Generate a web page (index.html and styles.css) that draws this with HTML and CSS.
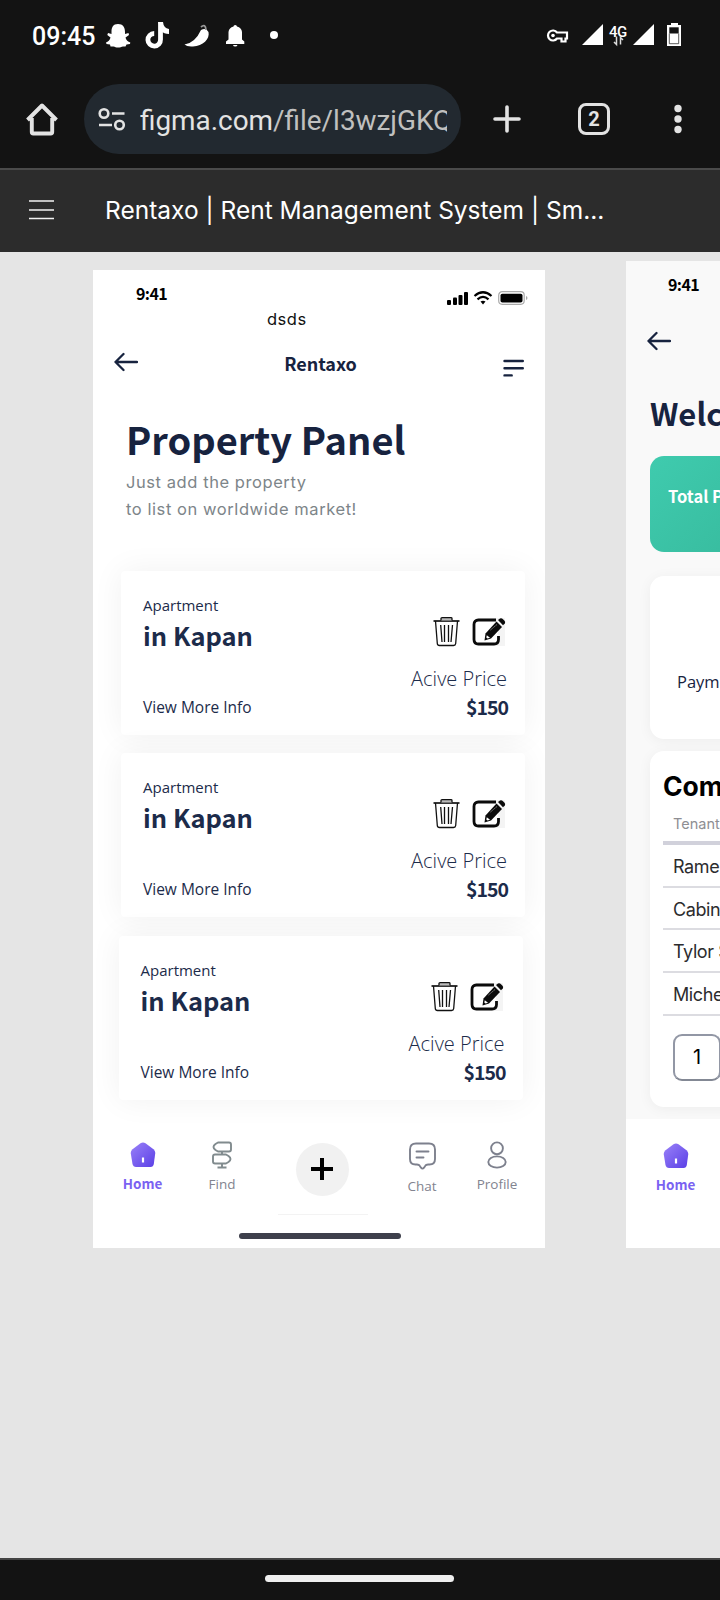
FILE: index.html
```
<!DOCTYPE html>
<html lang="en">
<head>
<meta charset="utf-8">
<title>Rentaxo</title>
<link rel="stylesheet" href="styles.css">
</head>
<body>
<svg class="defs" aria-hidden="true">
  <defs>
    <linearGradient id="violet" x1="0" y1="0" x2="1" y2="1"><stop offset="0" stop-color="#9a82f8"/><stop offset="1" stop-color="#5a3fe6"/></linearGradient>
    <symbol id="arrow" viewBox="0 0 24 20"><path d="M23 10H1.500M9.500 2L1.500 10L9.500 18" fill="none" stroke="#17233f" stroke-width="2.300" stroke-linecap="round" stroke-linejoin="round"/></symbol>
    <symbol id="home" viewBox="0 0 26 26"><path d="M10.500 1.300Q13 -.3 15.500 1.300L23.500 7.300Q25.500 9 25.200 11.500L23.800 22Q23.300 25 20.500 25H6Q3.200 25 2.500 22L.8 11.500Q.5 9 2.500 7.300Z" fill="url(#violet)"/><path d="M13 15.500V20.500" stroke="#fff" stroke-width="2.200"/></symbol>
    <symbol id="trash" viewBox="0 0 27 30"><g fill="none" stroke="#111" stroke-width="1.300" stroke-linejoin="round"><path d="M2.500 4L4.300 26.500Q4.500 28.500 6.500 28.500H20.500Q22.500 28.500 22.700 26.500L24.500 4M7.700 8L9 25M11.500 8V25M15.500 8V25M19.500 8L18 25"/><path d="M.5 4H26.500" stroke-width="1.700"/><path d="M8 3.500V1.500Q8 .7 9 .7H18Q19 .7 19 1.500V3.500" fill="#bbb"/></g></symbol>
    <symbol id="edit" viewBox="0 0 34 30"><path d="M5 1H33V29H5Z" fill="#f4f4f4"/><path d="M24 3H6.500Q2 3 2 7.500V22.500Q2 27 6.500 27H22Q26.500 27 26.500 22.500V19" fill="#fff" stroke="#0b0b0b" stroke-width="2.800"/><path d="M24.500 4.500L30 10L19 21.500L12.500 23.500L13.500 16.500Z" fill="#0b0b0b"/><path d="M26 3L28 1.500Q29.500.8 31 2.200L32.500 3.700Q33.700 5 32.800 6.500L31 8.300Z" fill="#0b0b0b"/><path d="M14.800 18.300L18 20.800L15.500 21.500L14.300 20.500Z" fill="#fff"/><path d="M18.500 13L25 7.500" stroke="#999" stroke-width="1" stroke-dasharray="1.500 1"/></symbol>
  </defs>
</svg>

<header class="status">
  <span class="clock">09:45</span>
  <svg class="notifs" viewBox="0 0 180 30" width="180" height="30" fill="#fff">
    <path d="M14 2C9 2 7.500 5.500 7.500 10V12L4 11L3.300 13L6.500 15.500C6 18 4 20 2 20.500L2.500 22L6 22.500L6.500 24.500H9.500C11 25 12 25.500 14 25.500S17.500 25 19 24.500H21.500L22.500 22.500L26 22L26.300 20.500C24 20 22 18 21.500 15.500L25 13L24.500 11L21 12V10C21 5.500 19 2 14 2Z"/>
    <path d="M56.500 0V17.500A6.300 6.300 0 1 1 50.200 11.500" fill="none" stroke="#fff" stroke-width="4.800"/><path d="M54.100 0H59Q59.500 6 65 7V12Q60 12 57 9Z"/>
    <path d="M97 8Q102 5 104.500 10C106 17 99 24 89 24.500Q83 25 80.500 22.500Q91 21 97 8Z"/><path d="M97 5Q101.500 1 102 8" fill="none" stroke="#999" stroke-width="1.800"/>
    <path d="M122 22V19.500L124.500 17.500V10Q125 5.500 129.500 4.500Q129.500 3 131.200 3T133 4.500Q137.500 5.500 138 10V17.500L140.300 19.500V22ZM129 23H133.500Q133 24.500 131.200 24.500T129 23Z"/>
    <circle cx="170" cy="13" r="4"/>
  </svg>
  <svg class="signals" viewBox="0 0 140 30" width="140" height="30" fill="#fff">
    <path d="M12 10.500A5 5 0 1 0 12 16.500H16.500V19.500H20.500V16.500H22V10.500Z" fill="none" stroke="#fff" stroke-width="2.200"/><circle cx="8" cy="13.500" r="1.800"/>
    <path d="M37 23L58 2V23ZM88 23L109 2V23Z"/>
    <text x="64" y="14.500" class="net">4G</text>
    <path d="M71.500 14.500V22.500L69 20M75.500 22.500V15.500L78 18" fill="none" stroke="#ddd" stroke-width="1.500"/>
    <path d="M126 1H133V3H136V24H122V3H126Z"/><path d="M124.300 5.300H133.700V11.500H124.300Z" fill="#131313"/><path d="M124.300 11.500V21.700H133.700V11.500" fill="none" stroke="#333" stroke-width=".8"/>
  </svg>
</header>

<div class="toolbar">
  <svg class="t-home" viewBox="0 0 32 34" width="32" height="34" fill="none" stroke="#e3e3e3" stroke-width="3.900" stroke-linejoin="round"><path d="M1.500 18L16 3.500L30.500 18M5.800 16V30Q5.800 31.500 7.300 31.500H24.700Q26.200 31.500 26.200 30V16"/></svg>
  <div class="url">
    <svg viewBox="0 0 28 24" width="28" height="24" fill="none" stroke="#e3e3e3" stroke-width="2.600"><circle cx="6" cy="6.500" r="4.300"/><path d="M14 6.500H26.500M1 18H14"/><circle cx="21.500" cy="18" r="4.300"/></svg>
    <span class="addr">figma.com<span class="path">/file/l3wzjGKQ</span></span>
  </div>
  <svg class="t-plus" viewBox="0 0 28 28" width="28" height="28" stroke="#e3e3e3" stroke-width="3.600" stroke-linecap="round"><path d="M14 2V26M2 14H26"/></svg>
  <div class="tabs">2</div>
  <svg class="t-more" viewBox="0 0 8 30" width="8" height="30" fill="#e3e3e3"><circle cx="4" cy="4.500" r="3.700"/><circle cx="4" cy="15" r="3.700"/><circle cx="4" cy="25.500" r="3.700"/></svg>
</div>

<div class="filebar">
  <svg viewBox="0 0 25 20" width="25" height="20" stroke="#f2f2f2" stroke-width="1.600"><path d="M0 1H25M0 10H25M0 18.500H25"/></svg>
  <span class="filename">Rentaxo | Rent Management System | Sm...</span>
</div>

<main class="canvas">
  <section class="frame one">
    <div class="phone-status">
      <span class="time">9:41</span>
      <svg viewBox="0 0 82 16" width="82" height="16"><g fill="#000"><rect x="0" y="10" width="4" height="5" rx="1"/><rect x="6" y="7.500" width="4" height="7.500" rx="1"/><rect x="11.500" y="5" width="4" height="10" rx="1"/><rect x="17" y="2" width="4" height="13" rx="1"/></g><path d="M27.500 6Q36 -1.500 44.500 6M30.500 9.300Q36 4.500 41.500 9.300" fill="none" stroke="#000" stroke-width="2.200"/><path d="M33.500 11.500Q36 10 38.500 11.500L36 14.500Z"/><rect x="51.700" y="1.700" width="25.500" height="12.600" rx="3.500" fill="none" stroke="#aaa" stroke-width="1.200"/><rect x="53.500" y="3.700" width="22" height="8.800" rx="1.800"/><path d="M79 6V10Q80.500 9.500 80.500 8T79 6Z" fill="#aaa"/></svg>
    </div>
    <div class="dsds">dsds</div>
    <div class="head">
      <svg class="back" width="24" height="20"><use href="#arrow"/></svg>
      <span class="brand">Rentaxo</span>
      <svg class="menu" viewBox="0 0 22 20" width="22" height="20" stroke="#17233f" stroke-width="2.400" stroke-linecap="round"><path d="M1.500 3H19.800M1.500 10.200H19.800M1.500 17.400H8.700"/></svg>
    </div>
    <h1>Property Panel</h1>
    <p class="lead">Just add the property<br>to list on worldwide market!</p>
    <div class="cards">
      <article class="card">
        <div class="info"><span class="kind">Apartment</span><span class="place">in Kapan</span><span class="more">View More Info</span></div>
        <div class="side"><div class="acts"><svg width="27" height="30"><use href="#trash"/></svg><svg width="34" height="30"><use href="#edit"/></svg></div><span class="label">Acive Price</span><span class="price">$150</span></div>
      </article>
      <article class="card">
        <div class="info"><span class="kind">Apartment</span><span class="place">in Kapan</span><span class="more">View More Info</span></div>
        <div class="side"><div class="acts"><svg width="27" height="30"><use href="#trash"/></svg><svg width="34" height="30"><use href="#edit"/></svg></div><span class="label">Acive Price</span><span class="price">$150</span></div>
      </article>
      <article class="card last">
        <div class="info"><span class="kind">Apartment</span><span class="place">in Kapan</span><span class="more">View More Info</span></div>
        <div class="side"><div class="acts"><svg width="27" height="30"><use href="#trash"/></svg><svg width="34" height="30"><use href="#edit"/></svg></div><span class="label">Acive Price</span><span class="price">$150</span></div>
      </article>
    </div>
    <nav class="nav">
      <a class="item on"><svg width="26" height="26"><use href="#home"/></svg><span>Home</span></a>
      <a class="item find"><svg viewBox="0 0 20 28" width="20" height="28" fill="none" stroke="#818b8e" stroke-width="1.900" stroke-linejoin="round"><path d="M6 1.500H17Q19 1.500 19 3.500V8.500Q19 10.500 17 10.500H6L3.500 9Q-.5 6 3.500 3ZM14 13.500H3Q1 13.500 1 15.500V20.500Q1 22.500 3 22.500H14L16.500 21Q20.500 18 16.500 15ZM10 10.500V13.500M10 22.500V26.500M5.500 26.500H14.500"/></svg><span>Find</span></a>
      <a class="item add"><span class="plus"><svg viewBox="0 0 24 24" width="24" height="24" stroke="#000" stroke-width="4"><path d="M12 1V23M1 12H23"/></svg></span></a>
      <a class="item chat"><svg viewBox="0 0 27 28" width="27" height="28" fill="none" stroke="#7d808d" stroke-width="1.900" stroke-linecap="round" stroke-linejoin="round"><path d="M7 1.500H20Q26 1.500 26 7.500V17Q26 22.500 20.500 22.500H19Q17 22.500 16.500 23.500L15 25.700Q13.500 27.500 12 25.700L10.500 23.500Q10 22.500 8 22.500H6.500Q1 22.500 1 17V7.500Q1 1.500 7 1.500ZM7.500 9.500H19.500M7.500 15.500H14.500"/></svg><span>Chat</span></a>
      <a class="item prof"><svg viewBox="0 0 20 28" width="20" height="28" fill="none" stroke="#7d808d" stroke-width="1.900"><circle cx="10" cy="7.300" r="5.900"/><ellipse cx="10" cy="21" rx="8.700" ry="5.600"/></svg><span>Profile</span></a>
    </nav>
    <div class="hair"></div>
    <div class="grip"></div>
  </section>

  <section class="frame two">
    <span class="time">9:41</span>
    <svg class="back" width="24" height="20"><use href="#arrow"/></svg>
    <h2>Welco</h2>
    <div class="total">Total P</div>
    <div class="pay">Payme</div>
    <div class="list">
      <h3>Com</h3>
      <div class="th">Tenant</div>
      <div class="tr">Rame</div>
      <div class="tr">Cabin</div>
      <div class="tr">Tylor S</div>
      <div class="tr">Miche</div>
      <div class="page">1</div>
    </div>
    <nav class="nav">
      <a class="item on"><svg width="26" height="26"><use href="#home"/></svg><span>Home</span></a>
    </nav>
  </section>
</main>
<footer class="gesture"><i></i></footer>
</body>
</html>
```
FILE: styles.css
```
* { box-sizing: border-box; }
body { margin: 0; width: 720px; height: 1600px; overflow: hidden; background: #131313; font-family: "Open Sans", sans-serif; display: flex; flex-direction: column; }
svg { display: block; flex: none; }
.defs { width: 0; height: 0; position: absolute; }

.status { height: 84px; padding: 22px 36px 0 32px; display: flex; color: #fff; font-family: Roboto, sans-serif; flex: none; }
.clock { font-size: 25px; font-weight: 500; line-height: 30px; width: 72px; white-space: nowrap; }
.signals { margin-left: auto; margin-right: -1px; }
.net { font: 500 15px Roboto, sans-serif; letter-spacing: -.5px; }

.toolbar { height: 86px; border-bottom: 2px solid #4a4a4a; display: flex; align-items: flex-start; padding: 0 38px 0 26px; flex: none; }
.t-home { margin-top: 18px; }
.url { width: 377px; height: 70px; border-radius: 35px; background: #222930; margin-left: 26px; padding: 0 14px; display: flex; align-items: center; gap: 14px; }
.addr { flex: 1; overflow: hidden; white-space: nowrap; font: 27.900px/36px Roboto, sans-serif; color: #e3e3e3; margin-top: 3px; }
.path { color: #c0c0bf; }
.t-plus { margin: 21px 0 0 32px; }
.tabs { width: 32px; height: 32px; border: 3.500px solid #e3e3e3; border-radius: 8px; margin: 19px 0 0 57px; font: 700 20px/26px Roboto, sans-serif; color: #e3e3e3; text-align: center; }
.t-more { margin: 20px 0 0 auto; }

.filebar { height: 82px; background: #2c2c2c; display: flex; align-items: center; padding: 0 0 3px 29px; flex: none; }
.filename { margin-left: 51px; font: 24.500px/36px Inter, sans-serif; color: #fff; white-space: nowrap; }

.canvas { position: relative; height: 1306px; background: #e5e5e5; overflow: hidden; flex: none; }
.frame { position: absolute; width: 452px; display: flex; flex-direction: column; color: #17233f; }
.one { left: 93px; top: 18px; height: 978px; background: #fff; overflow: hidden; }
.two { left: 626px; top: 9px; height: 987px; background: #f9f9f9; }
.time, .brand, h1, h2, .place, .price, .total, .item.on { font-family: "Noto Sans CJK SC", "Open Sans", sans-serif; font-weight: 700; }
.time { font-size: 16px; line-height: 20px; letter-spacing: -.6px; color: #000; }

.phone-status { height: 39px; display: flex; justify-content: space-between; align-items: flex-start; padding: 13px 16px 0 43px; flex: none; }
.phone-status svg { margin-top: 7px; }
.dsds { font: 16.500px/20px Inter, sans-serif; color: #111; padding-left: 174px; letter-spacing: .5px; margin-top: -.5px; }
.head { display: flex; align-items: flex-start; justify-content: space-between; height: 36px; margin-top: 21px; padding: 1px 20px 0 21px; }
.head .back { margin-top: 1px; }
.head .menu { margin-top: 7px; }
.brand { font-size: 18px; line-height: 24px; }
h1 { margin: 30px 0 0 33px; font-size: 38px; line-height: 46px; white-space: nowrap; }
.lead { margin: 7px 0 0 33px; font: 16.500px/27.500px Inter, sans-serif; letter-spacing: .57px; color: #7d8589; }

.cards { margin: 47px 0 0 28px; display: flex; flex-direction: column; gap: 18px; }
.card { width: 404px; height: 164px; border-radius: 4px; background: #fff; box-shadow: 0 0 32px rgba(0, 0, 0, .06); display: flex; justify-content: space-between; padding: 0 18px 0 22px; color: #1c2b4a; }
.card.last { margin: 1px 0 0 -2.500px; }
.info, .side { display: flex; flex-direction: column; white-space: nowrap; }
.side { align-items: flex-end; }
.kind { font-size: 15px; line-height: 20px; margin-top: 24px; }
.place { font-size: 25.500px; line-height: 32px; margin-top: 4px; }
.more { font-size: 15.500px; line-height: 20px; font-weight: 500; margin-top: 46px; }
.acts { display: flex; gap: 12px; margin: 46px 1px 0 0; }
.label { font-size: 20px; font-weight: 300; line-height: 24px; margin-top: 20px; }
.price { font-size: 19.500px; line-height: 24px; letter-spacing: -1px; margin: 4px -1px 0 0; }

.nav { display: flex; height: 80px; margin-top: 41px; padding-left: 10px; flex: none; }
.item { width: 79px; display: flex; flex-direction: column; align-items: center; font-size: 13.500px; line-height: 18px; color: #82848f; }
.item.on { color: #7a62f2; }
.item.on svg { margin: 1px 0 6px; }
.item.find { width: 80px; }
.find svg, .prof svg { margin-bottom: 6px; }
.item.add { width: 120px; }
.item .plus { width: 53px; height: 53px; border-radius: 50%; background: #f1f1f1; display: flex; align-items: center; justify-content: center; margin-top: 2px; }
.item.chat { width: 80px; padding-top: 1px; }
.chat svg { margin-bottom: 7px; }
.item.prof { width: 70px; }
.hair { width: 90px; height: 1px; background: #f3f3f3; margin: -7px 0 0 185px; flex: none; }
.grip { width: 162px; height: 6px; border-radius: 3px; background: #3e404c; margin: 18px 0 0 146px; flex: none; }

.two .time { margin: 13px 0 0 42px; }
.two .back { margin: 37px 0 0 21px; }
h2 { margin: 40px 0 0 24px; font-size: 31px; line-height: 44px; }
.total { margin: 21px 0 0 24px; width: 404px; height: 96px; border-radius: 14px; background: linear-gradient(135deg, #3fcbae, #2ca285); color: #fff; font-size: 16.500px; line-height: 24px; padding: 28px 18px; white-space: nowrap; flex: none; }
.pay { margin: 24px 0 0 24px; width: 404px; height: 163px; border-radius: 14px; background: #fff; box-shadow: 0 2px 14px rgba(0, 0, 0, .05); font-size: 16.500px; line-height: 24px; font-weight: 500; padding: 94px 27px 0; flex: none; }
.list { margin: 12px 0 0 24px; width: 404px; height: 356px; border-radius: 14px; background: #fff; box-shadow: 0 2px 14px rgba(0, 0, 0, .05); padding: 20px 13px 0; font-family: Inter, sans-serif; color: #2c2c2e; flex: none; }
h3 { margin: 0; font-size: 26.500px; line-height: 30px; color: #000; }
.th { font-size: 14.500px; line-height: 20px; color: #8e8e93; padding: 13px 10px 0; height: 44px; border-bottom: 4px solid #d1d1db; }
.tr { font-size: 18px; line-height: 24px; letter-spacing: -.4px; height: 42.700px; padding: 10px 10px 0; border-bottom: 2px solid #dcdce1; }
.page { width: 48px; height: 47px; margin: 18px 0 0 10px; border: 2px solid #9297a5; border-bottom-color: #838894; border-radius: 9px; font-size: 20px; line-height: 43px; color: #000; text-align: center; }
.two .nav { background: #fff; height: 129px; margin-top: 12px; padding-top: 23px; }

.gesture { flex: 1; border-top: 2px solid #444; display: flex; justify-content: center; padding-right: 1px; }
.gesture i { width: 189px; height: 7px; border-radius: 4px; background: #efefef; margin-top: 15px; }
```
